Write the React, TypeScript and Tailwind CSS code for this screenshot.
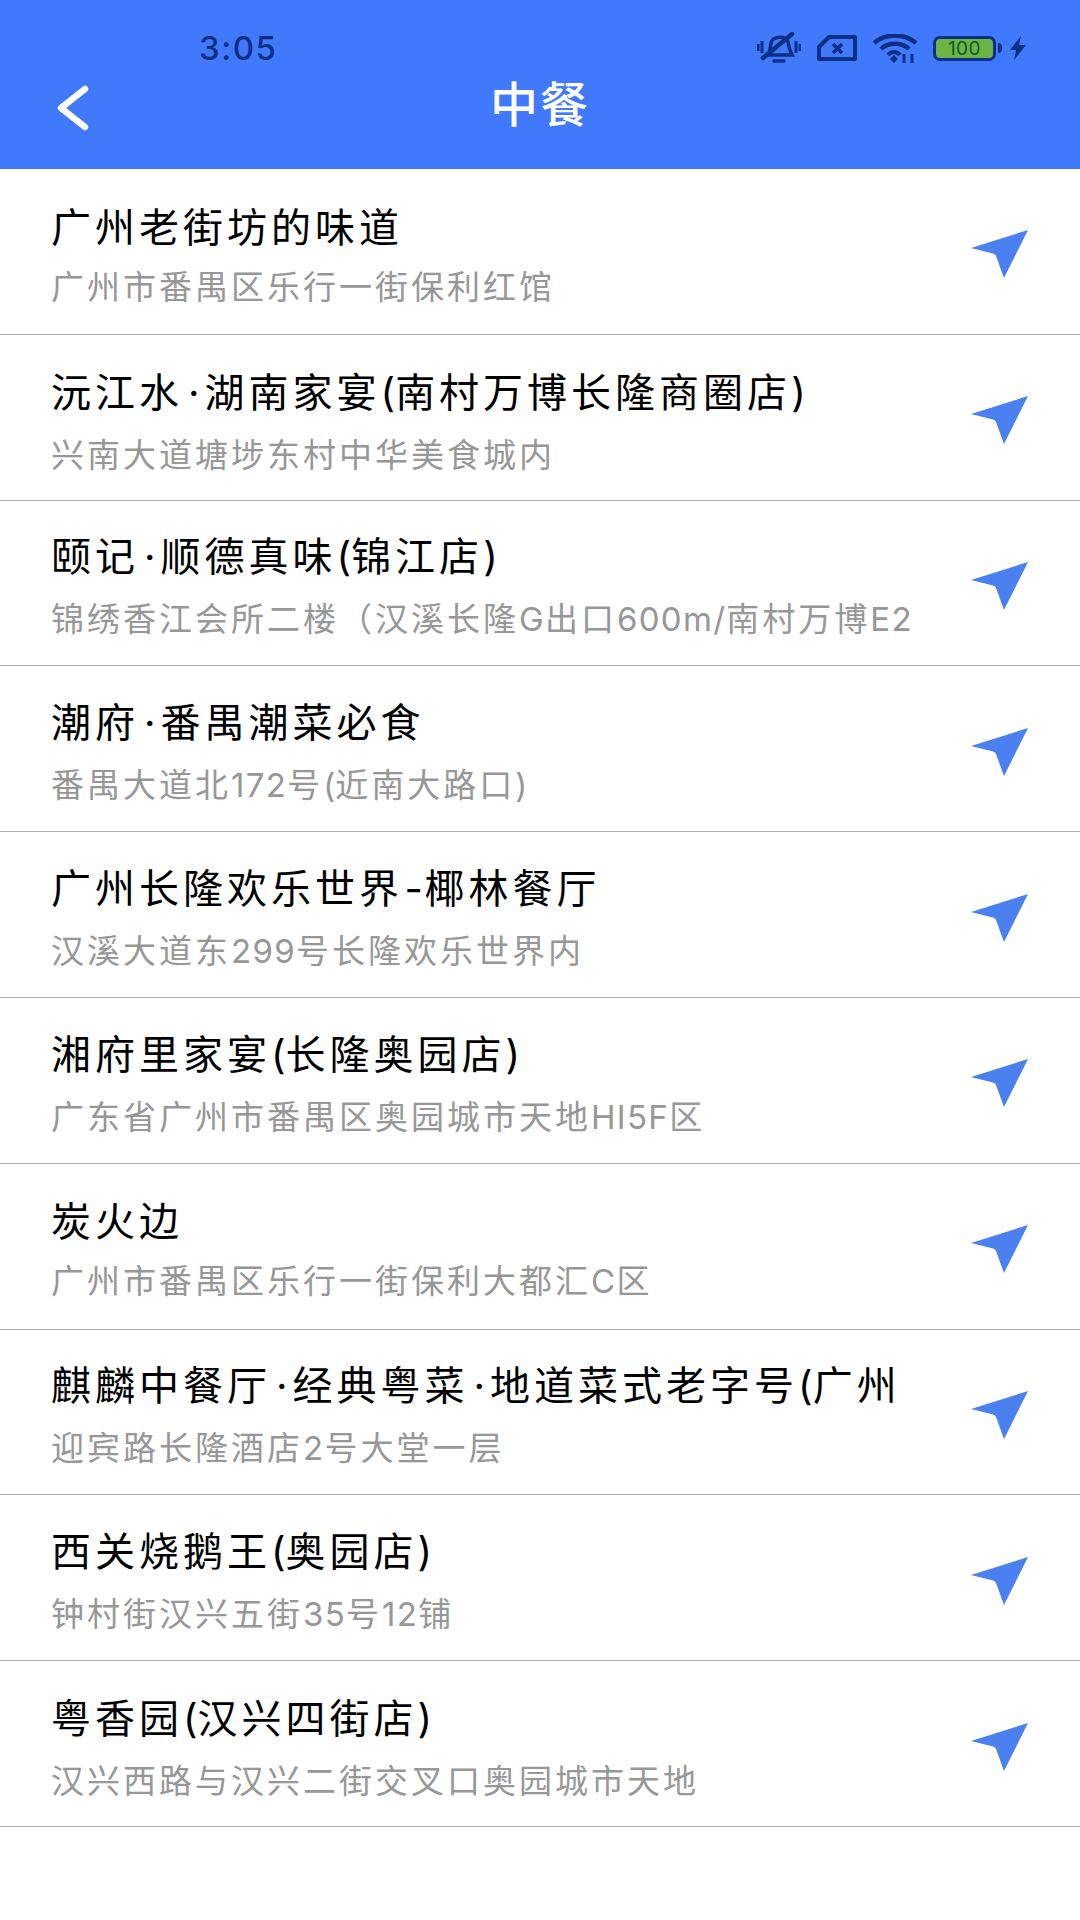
import React from "react";

const rows: [string, string][] = [
  ["广州老街坊的味道", "广州市番禺区乐行一街保利红馆"],
  ["沅江水·湖南家宴(南村万博长隆商圈店)", "兴南大道塘埗东村中华美食城内"],
  ["颐记·顺德真味(锦江店)", "锦绣香江会所二楼（汉溪长隆G出口600m/南村万博E2"],
  ["潮府·番禺潮菜必食", "番禺大道北172号(近南大路口)"],
  ["广州长隆欢乐世界-椰林餐厅", "汉溪大道东299号长隆欢乐世界内"],
  ["湘府里家宴(长隆奥园店)", "广东省广州市番禺区奥园城市天地HI5F区"],
  ["炭火边", "广州市番禺区乐行一街保利大都汇C区"],
  ["麒麟中餐厅·经典粤菜·地道菜式老字号(广州", "迎宾路长隆酒店2号大堂一层"],
  ["西关烧鹅王(奥园店)", "钟村街汉兴五街35号12铺"],
  ["粤香园(汉兴四街店)", "汉兴西路与汉兴二街交叉口奥园城市天地"],
];

function Mixed({ text }: { text: string }) {
  const parts = text.split(/([A-Za-z0-9/]+|[()·-])/).filter(Boolean);
  return (
    <>
      {parts.map((p, i) => {
        if (p === "·") return <span key={i} className="px-[5px] font-['Inter',sans-serif] tracking-normal">{p}</span>;
        if (p === "-") return <span key={i} className="px-[1.5px] font-['Inter',sans-serif] tracking-normal">{p}</span>;
        if (p === "(" || p === ")") return <span key={i} className="font-['Inter',sans-serif] tracking-normal">{p}</span>;
        if (/^[A-Za-z0-9/]+$/.test(p)) return <span key={i} className="font-['Inter',sans-serif] tracking-[1.3px]">{p}</span>;
        return <span key={i}>{p}</span>;
      })}
    </>
  );
}

function NavIcon() {
  return (
    <svg width="60" height="52" viewBox="0 0 60 52" className="mt-[8px] shrink-0">
      <path d="M1 19 L58 1 L34 49 L26 27 Q25.5 25 23 24.5 Z" fill="#4a80f0" />
    </svg>
  );
}

function StatusIcons() {
  const c = "#0d2f85";
  return (
    <div className="flex items-center">
      <svg width="44" height="32" viewBox="0 0 44 32" fill="none" stroke={c} strokeWidth="3.5">
        <path d="M11 23 C14 19 13 14 14 11 C16 4 28 3 31 10 C32 14 32 18 35 23 Z" />
        <path d="M17 29 H27" strokeLinecap="round" />
        <path d="M6 26 L35 2" strokeLinecap="round" strokeWidth="4.5" />
        <path d="M1 12 V19 M5 9 V21 M39 9 V21 M43 12 V19" strokeWidth="3" />
      </svg>
      <svg width="40" height="26" viewBox="0 0 40 26" fill="none" stroke={c} strokeWidth="4" className="ml-[16px]">
        <path d="M2 12 L12 2 H38 V24 H2 Z" strokeLinejoin="round" />
        <path d="M16 9 L25 18 M25 9 L16 18" strokeWidth="3.5" />
      </svg>
      <svg width="44" height="29" viewBox="0 0 44 29" fill="none" stroke={c} strokeWidth="4.5" className="ml-[16px]">
        <path d="M1 9 C13 -1 31 -1 43 9" />
        <path d="M8 15 C15 8 29 8 36 15" />
        <path d="M15 21 C18 17 24 17 27 21" strokeWidth="4" />
        <path d="M17 25 L21 21 L25 25 L21 29 Z" fill={c} stroke="none" />
        <path d="M31 20 V29 M39 20 V29" strokeWidth="3" />
      </svg>
      <div className="ml-[16px] flex h-[25px] w-[63px] items-center justify-center rounded-[7px] border-[3px] border-[#0d2f85] bg-[#6cb544]">
        <span className="font-['Inter',sans-serif] text-[19px] leading-none tracking-[0.5px] text-[#0b5a2a]">100</span>
      </div>
      <div className="ml-[2px] h-[10px] w-[4px] rounded-r-sm bg-[#0d2f85]" />
      <svg width="18" height="24" viewBox="0 0 18 24" className="ml-[7px]">
        <path d="M12 0 L1 14 H7 L5 24 L17 9 H10 Z" fill={c} />
      </svg>
    </div>
  );
}

export default function App() {
  return (
    <div className="flex h-[1920px] w-[1080px] flex-col bg-white font-['Noto_Sans_CJK_SC','Noto_Sans',sans-serif]">
      <header className="flex h-[169px] shrink-0 flex-col bg-[#4079fb]">
        <div className="flex h-[72px] items-center justify-between pl-[199px] pr-[53px] pt-[24px]">
          <span className="font-['Inter',sans-serif] text-[33px] font-medium leading-none tracking-[1.5px] text-[#0d2f85]">3:05</span>
          <StatusIcons />
        </div>
        <div className="relative flex h-[58px] items-center justify-center">
          <svg width="34" height="48" viewBox="0 0 34 48" fill="none" stroke="white" strokeWidth="6.5" strokeLinecap="round" strokeLinejoin="round" className="absolute left-[55px] top-[13px]">
            <path d="M30 4 L6 23 L30 42" />
          </svg>
          <span className="text-[48px] font-medium leading-none tracking-[2px] text-white">中餐</span>
        </div>
      </header>
      <main className="flex flex-col">
        {rows.map(([t, s]) => (
          <div key={t} className="flex h-[165.8px] items-center justify-between border-b-[1.5px] border-[#b0b0b0] pl-[51px] pr-[50px]">
            <div className="flex min-w-0 flex-col pt-[4px]">
              <div className="whitespace-nowrap text-[40px] leading-[50px] tracking-[4px] text-black"><Mixed text={t} /></div>
              <div className="mt-[14px] whitespace-nowrap text-[33px] leading-[42px] tracking-[3px] text-[#979797]"><Mixed text={s} /></div>
            </div>
            <NavIcon />
          </div>
        ))}
      </main>
    </div>
  );
}
